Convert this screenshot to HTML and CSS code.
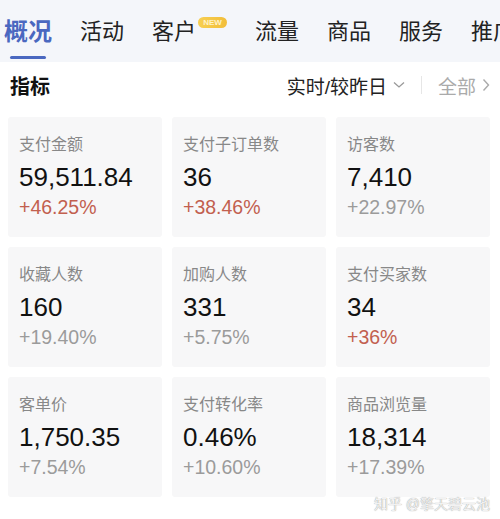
FILE: index.html
```html
<!DOCTYPE html>
<html lang="zh">
<head>
<meta charset="utf-8">
<link rel="stylesheet" href="styles.css">
</head>
<body>
<div class="page">
  <nav class="tabs">
    <div class="tab active">概况<span class="bar"></span></div>
    <div class="tab">活动</div>
    <div class="tab">客户<span class="new">NEW</span></div>
    <div class="tab">流量</div>
    <div class="tab">商品</div>
    <div class="tab">服务</div>
    <div class="tab">推广</div>
  </nav>
  <div class="head">
    <div class="title">指标</div>
    <div class="tools">
      <span class="period">实时/较昨日</span>
      <svg class="chev" width="12" height="8" viewBox="0 0 12 8"><path d="M1 1.5 L6 6 L11 1.5" fill="none" stroke="#999" stroke-width="1.3"/></svg>
      <span class="sep"></span>
      <span class="all">全部</span>
      <svg class="chev" width="8" height="14" viewBox="0 0 8 14"><path d="M1.5 1.5 L6.5 7 L1.5 12.5" fill="none" stroke="#aaa" stroke-width="1.4"/></svg>
    </div>
  </div>
  <div class="grid">
    <div class="card"><div class="label">支付金额</div><div class="value">59,511.84</div><div class="chg up">+46.25%</div></div>
    <div class="card"><div class="label">支付子订单数</div><div class="value">36</div><div class="chg up">+38.46%</div></div>
    <div class="card"><div class="label">访客数</div><div class="value">7,410</div><div class="chg">+22.97%</div></div>
    <div class="card"><div class="label">收藏人数</div><div class="value">160</div><div class="chg">+19.40%</div></div>
    <div class="card"><div class="label">加购人数</div><div class="value">331</div><div class="chg">+5.75%</div></div>
    <div class="card"><div class="label">支付买家数</div><div class="value">34</div><div class="chg up">+36%</div></div>
    <div class="card"><div class="label">客单价</div><div class="value">1,750.35</div><div class="chg">+7.54%</div></div>
    <div class="card"><div class="label">支付转化率</div><div class="value">0.46%</div><div class="chg">+10.60%</div></div>
    <div class="card"><div class="label">商品浏览量</div><div class="value">18,314</div><div class="chg">+17.39%</div></div>
  </div>
  <div class="mark">知乎 @擎天碧云池</div>
</div>
</body>
</html>
```
FILE: styles.css
```css
* { box-sizing: border-box; }
html, body { margin: 0; padding: 0; background: #fff; }
body { font-family: "Liberation Sans", "Noto Sans CJK SC", sans-serif; color: #111; overflow: hidden; }
.page { position: relative; width: 500px; height: 519px; }
.tabs {
  display: flex; height: 62px; background: #f4f6fa; padding-left: 4px; gap: 28px;
  align-items: flex-start; white-space: nowrap; overflow: hidden;
}
.tab { position: relative; display: flex; align-items: flex-start; font-size: 22px; line-height: 26px; padding-top: 19px; color: #222; flex: none; }
.tab.active { color: #4a68c0; font-size: 24px; font-weight: bold; }
.tab .bar { position: absolute; left: 6px; width: 36px; bottom: -14px; height: 3px; border-radius: 2px; background: #4a68c0; }
.new {
  display: block; margin: -2px 0 0 2px; width: 29px; height: 11px; border-radius: 6px;
  background: linear-gradient(90deg, #f7cf52, #f2be3a); color: #fff3c8; font-size: 8px; line-height: 11px;
  text-align: center; font-weight: bold;
}
.head { display: flex; align-items: center; justify-content: space-between; height: 46px; padding: 0 10px; }
.title { font-size: 20px; font-weight: bold; color: #111; }
.tools { display: flex; align-items: center; }
.period { font-size: 19px; color: #222; }
.tools .chev { margin-left: 6px; }
.sep { width: 1px; height: 18px; background: #e6e6e6; margin: 0 16px 0 16px; }
.all { font-size: 19px; color: #aaa; }
.grid {
  display: grid; grid-template-columns: repeat(3, 154px); column-gap: 10px; row-gap: 10px;
  padding: 9px 0 0 8px;
}
.card { background: #f7f7f8; height: 120px; border-radius: 3px; padding: 18px 0 0 11px; }
.label { font-size: 16px; line-height: 20px; color: #888; }
.value { font-size: 26px; line-height: 30px; margin-top: 7px; color: #111; }
.chg { font-size: 19.5px; line-height: 24px; margin-top: 3px; color: #9b9b9b; }
.chg.up { color: #c2604f; }
.mark {
  position: absolute; right: 10px; bottom: 6px; font-size: 14px; color: #f2f2f2;
  text-shadow: 0 0 1px rgba(0,0,0,0.5);
}
```
